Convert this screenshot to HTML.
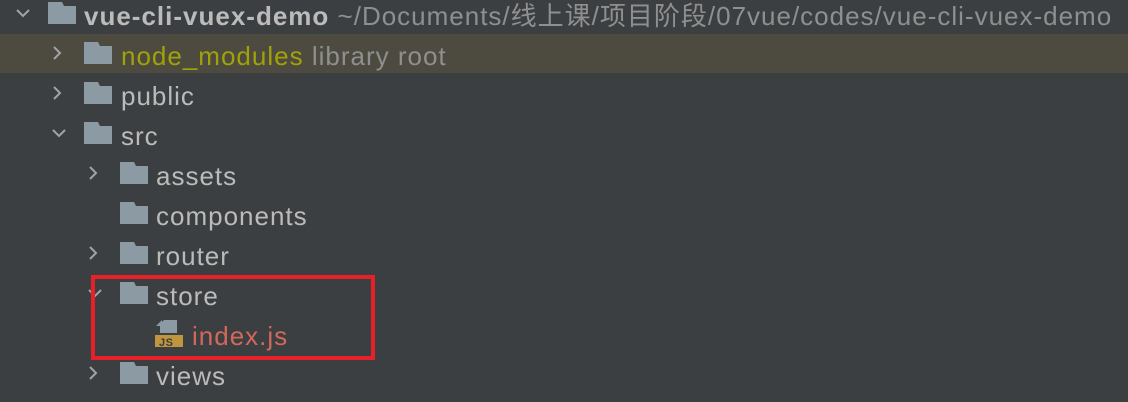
<!DOCTYPE html>
<html><head><meta charset="utf-8"><style>
html,body{margin:0;padding:0}
body{width:1128px;height:402px;background:#3c3f41;position:relative;overflow:hidden;font-family:"Liberation Sans","Noto Sans CJK SC",sans-serif;font-size:26px;letter-spacing:1px;color:#bbbbbb}
.hl{position:absolute;left:0;top:34px;width:1128px;height:39px;background:#4d4a3f}
.t{position:absolute;white-space:nowrap;line-height:30px}
.f{position:absolute;width:28px;height:22px}
.c{position:absolute}
.box{position:absolute;left:91px;top:275px;width:276px;height:77px;border:4px solid #e8202a}
</style></head><body>
<div class="hl"></div>
<svg width="0" height="0" style="position:absolute"><defs>
<symbol id="fd" viewBox="0 0 28 22"><path d="M0 0H14L16 4H28V22H0Z" fill="#8c9aa3"/></symbol>
<symbol id="cr" viewBox="0 0 14 14"><path d="M4 1L10 7L4 13" fill="none" stroke="#a0a4a7" stroke-width="2"/></symbol>
<symbol id="cd" viewBox="0 0 14 14"><path d="M1 4L7 10L13 4" fill="none" stroke="#a0a4a7" stroke-width="2"/></symbol>
</defs></svg>

<svg class="c" style="left:16px;top:6px" width="14" height="14"><use href="#cd"/></svg>
<svg class="f" style="left:48px;top:2px"><use href="#fd"/></svg>
<div class="t" style="left:84px;top:1px"><b>vue-cli-vuex-demo</b> <span style="color:#8f8f8f">~/Documents/线上课/项目阶段/07vue/codes/vue-cli-vuex-demo</span></div>

<svg class="c" style="left:50px;top:46px" width="14" height="14"><use href="#cr"/></svg>
<svg class="f" style="left:84px;top:42px"><use href="#fd"/></svg>
<div class="t" style="left:121px;top:41px"><span style="color:#a2a208">node_modules</span> <span style="color:#8f8f8f">library root</span></div>

<svg class="c" style="left:50px;top:86px" width="14" height="14"><use href="#cr"/></svg>
<svg class="f" style="left:84px;top:82px"><use href="#fd"/></svg>
<div class="t" style="left:121px;top:81px">public</div>

<svg class="c" style="left:52px;top:126px" width="14" height="14"><use href="#cd"/></svg>
<svg class="f" style="left:84px;top:122px"><use href="#fd"/></svg>
<div class="t" style="left:121px;top:121px">src</div>

<svg class="c" style="left:86px;top:166px" width="14" height="14"><use href="#cr"/></svg>
<svg class="f" style="left:120px;top:162px"><use href="#fd"/></svg>
<div class="t" style="left:156px;top:161px">assets</div>

<svg class="f" style="left:120px;top:202px"><use href="#fd"/></svg>
<div class="t" style="left:156px;top:201px">components</div>

<svg class="c" style="left:86px;top:246px" width="14" height="14"><use href="#cr"/></svg>
<svg class="f" style="left:120px;top:242px"><use href="#fd"/></svg>
<div class="t" style="left:156px;top:241px">router</div>

<svg class="c" style="left:88px;top:286px" width="14" height="14"><use href="#cd"/></svg>
<svg class="f" style="left:120px;top:282px"><use href="#fd"/></svg>
<div class="t" style="left:156px;top:281px">store</div>

<svg class="c" style="left:155px;top:320px" width="30" height="30" viewBox="0 0 30 30">
<path d="M9 0H22V13H5V4Z" fill="#8c9aa3"/><path d="M7 0V6H1Z" fill="#8c9aa3"/>
<rect x="0" y="15" width="28" height="12" fill="#c0953d"/>
<text x="4" y="26" font-family="Liberation Sans,sans-serif" font-size="11" font-weight="bold" fill="#3c3f41" letter-spacing="0.5">JS</text>
</svg>
<div class="t" style="left:192px;top:321px;color:#d2685a">index.js</div>

<svg class="c" style="left:86px;top:366px" width="14" height="14"><use href="#cr"/></svg>
<svg class="f" style="left:120px;top:362px"><use href="#fd"/></svg>
<div class="t" style="left:156px;top:361px">views</div>

<div class="box"></div>
</body></html>
